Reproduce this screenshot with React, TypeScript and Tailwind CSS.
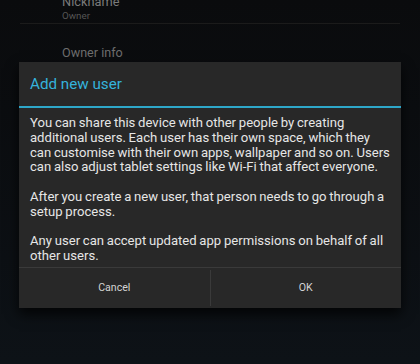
import React from "react";

export default function App() {
  return (
    <div
      className="relative w-[420px] h-[364px] overflow-hidden bg-gradient-to-b from-[#0a0b0d] to-[#0d1217]"
      style={{ fontFamily: "Roboto, 'Noto Sans', sans-serif" }}
    >
      <div className="flex flex-col">
        <div className="h-[29px] pl-[62px] flex flex-col -mt-[6px]">
          <div className="text-[12.8px] leading-[16px] text-[#7a7a7a]">Nickname</div>
          <div className="text-[9.8px] leading-[12px] text-[#555]">Owner</div>
        </div>
        <div className="mx-[20px] h-px bg-[#1b1b1b]" />
        <div className="pl-[62px] pt-[21px] text-[12.6px] leading-[16px] text-[#6e6e6e]">Owner info</div>
      </div>

      <div className="absolute left-[19px] top-[62px] w-[382px] h-[246px] bg-[#282828] flex flex-col shadow-[0_6px_12px_rgba(0,0,0,0.8)]">
        <div className="h-[44px] flex items-center pl-[11px] text-[15.2px] text-[#35b3dc]">
          Add new user
        </div>
        <div className="h-[2px] bg-[#2ea7c9]" />
        <div className="pl-[11px] pt-[8px] text-[13.1px] leading-[14.8px] [word-spacing:-0.5px] text-[#e6e6e6] whitespace-nowrap flex flex-col gap-[14.8px] h-[159px]">
          <p>
            You can share this device with other people by creating
            <br />
            additional users. Each user has their own space, which they
            <br />
            can customise with their own apps, wallpaper and so on. Users
            <br />
            can also adjust tablet settings like Wi-Fi that affect everyone.
          </p>
          <p>
            After you create a new user, that person needs to go through a
            <br />
            setup process.
          </p>
          <p>
            Any user can accept updated app permissions on behalf of all
            <br />
            other users.
          </p>
        </div>
        <div className="h-px bg-[#3a3a3a]" />
        <div className="flex flex-1 text-[10.6px] text-[#d4d4d4]">
          <div className="flex-1 flex items-center justify-center">Cancel</div>
          <div className="w-px bg-[#3a3a3a] my-[2px]" />
          <div className="flex-1 flex items-center justify-center">OK</div>
        </div>
      </div>
    </div>
  );
}
